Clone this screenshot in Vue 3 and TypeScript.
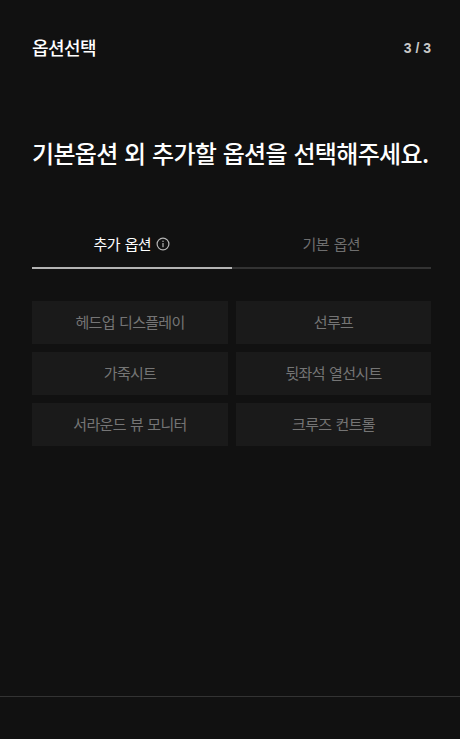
<script setup lang="ts">
const options: string[] = ['헤드업 디스플레이', '선루프', '가죽시트', '뒷좌석 열선시트', '서라운드 뷰 모니터', '크루즈 컨트롤']
</script>

<template>
  <div class="page">
    <header class="top">
      <span class="title">옵션선택</span>
      <span class="step">3 / 3</span>
    </header>
    <h1 class="headline">기본옵션 외 추가할 옵션을 선택해주세요.</h1>
    <nav class="tabs">
      <div class="tab active">
        <span>추가 옵션</span>
        <svg class="info" width="14" height="14" viewBox="0 0 14 14" fill="none">
          <circle cx="7" cy="7" r="5.9" stroke="#b4b4b4" stroke-width="1.2" />
          <rect x="6.4" y="6" width="1.2" height="4.2" fill="#b4b4b4" />
          <rect x="6.4" y="3.7" width="1.2" height="1.3" fill="#b4b4b4" />
        </svg>
      </div>
      <div class="tab">기본 옵션</div>
    </nav>
    <div class="grid">
      <div v-for="o in options" :key="o" class="opt">{{ o }}</div>
    </div>
    <footer class="foot"></footer>
  </div>
</template>

<style scoped>
.page {
  width: 460px;
  height: 739px;
  background: #111111;
  font-family: "Noto Sans CJK KR", "Noto Sans", sans-serif;
  display: flex;
  flex-direction: column;
  overflow: hidden;
  box-sizing: border-box;
}
.top {
  display: flex;
  justify-content: space-between;
  align-items: center;
  padding: 35px 29px 0 32px;
  height: 25px;
}
.title {
  font-size: 18px;
  font-weight: 500;
  color: #fff;
  letter-spacing: -0.6px;
  line-height: 25px;
}
.step {
  font-family: "Liberation Sans", Arial, sans-serif;
  font-size: 14px;
  font-weight: 700;
  color: #c8c8c8;
  line-height: 25px;
  padding-top: 1px;
}
.headline {
  margin: 76px 0 0;
  padding-left: 32px;
  font-size: 24px;
  font-weight: 500;
  color: #fff;
  letter-spacing: -0.66px;
  word-spacing: 1.7px;
  line-height: 34px;
  white-space: nowrap;
}
.tabs {
  display: flex;
  margin: 55px 29px 0 32px;
}
.tab {
  flex: 0 0 50%;
  height: 44px;
  box-sizing: border-box;
  border-bottom: 2px solid #333;
  display: flex;
  align-items: center;
  justify-content: center;
  gap: 5px;
  padding-bottom: 5px;
  font-size: 15px;
  letter-spacing: -0.7px;
  word-spacing: 2.3px;
  color: #6e6e6e;
}
.tab.active {
  color: #fff;
  border-bottom-color: #b4b4b4;
}
.grid {
  display: grid;
  grid-template-columns: 196px 195px;
  grid-auto-rows: 43px;
  gap: 8px;
  margin: 32px 0 0 32px;
}
.opt {
  background: #1a1a1a;
  color: #757575;
  font-size: 15px;
  letter-spacing: -0.7px;
  word-spacing: 1.6px;
  display: flex;
  align-items: center;
  justify-content: center;
  padding-bottom: 2px;
  box-sizing: border-box;
}
.foot {
  margin-top: auto;
  height: 43px;
  box-sizing: border-box;
  border-top: 1px solid #333;
}
</style>
